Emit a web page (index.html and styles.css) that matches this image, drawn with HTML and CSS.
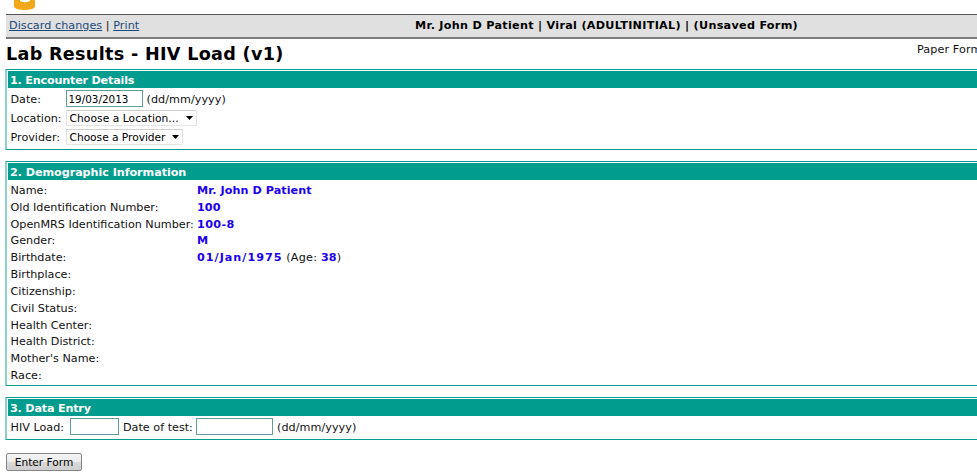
FILE: index.html
```html
<!DOCTYPE html>
<html lang="en">
<head>
<meta charset="utf-8">
<title>Lab Results - HIV Load (v1)</title>
<link rel="stylesheet" href="styles.css">
</head>
<body>
<div class="page">
  <div class="logo"><svg width="24" height="11" viewBox="0 0 24 11"><path d="M1 0H7V1Q12 3.5 17 1V0H22V7Q20 10 11.5 10Q3 10 1 7Z" fill="#f0a818"/></svg></div>
  <div class="bar">
    <div class="links"><a href="#">Discard changes</a> | <a href="#">Print</a></div>
    <div class="patient">Mr. John D Patient | Viral (ADULTINITIAL) | (Unsaved Form)</div>
  </div>
  <div class="title"><h1>Lab Results - HIV Load (v1)</h1><span class="paper">Paper Form</span></div>

  <section class="encounter">
    <h2>1. Encounter Details</h2>
    <div class="field"><label>Date:</label><input class="date" value="19/03/2013"><span>(dd/mm/yyyy)</span></div>
    <div class="field"><label>Location:</label><div class="select location"><span>Choose a Location...</span><svg width="7" height="4"><path d="M0 0H7L3.5 4Z"/></svg></div></div>
    <div class="field"><label>Provider:</label><div class="select provider"><span>Choose a Provider</span><svg width="7" height="4"><path d="M0 0H7L3.5 4Z"/></svg></div></div>
  </section>

  <section class="demographic">
    <h2>2. Demographic Information</h2>
    <dl>
      <dt>Name:</dt><dd><b>Mr. John D Patient</b></dd>
      <dt>Old Identification Number:</dt><dd><b>100</b></dd>
      <dt>OpenMRS Identification Number:</dt><dd><b class="number">100-8</b></dd>
      <dt>Gender:</dt><dd><b>M</b></dd>
      <dt>Birthdate:</dt><dd><b class="birth">01/Jan/1975</b> <span class="age">(Age: <b>38</b>)</span></dd>
      <dt>Birthplace:</dt><dd></dd>
      <dt>Citizenship:</dt><dd></dd>
      <dt>Civil Status:</dt><dd></dd>
      <dt>Health Center:</dt><dd></dd>
      <dt>Health District:</dt><dd></dd>
      <dt>Mother's Name:</dt><dd></dd>
      <dt>Race:</dt><dd></dd>
    </dl>
  </section>

  <section class="entry">
    <h2>3. Data Entry</h2>
    <div class="field"><label class="load">HIV Load:</label><input class="short"><label class="test">Date of test:</label><input class="date"><span>(dd/mm/yyyy)</span></div>
  </section>
  <button>Enter Form</button>
</div>
</body>
</html>
```
FILE: styles.css
```css
* { box-sizing: border-box; }
body { margin: 0; background: #fff; color: #111; font: 11.2px/17px "DejaVu Sans", sans-serif; overflow: hidden; }
.page { padding-left: 6px; white-space: nowrap; }
.logo { height: 14px; padding-left: 7px; }
.logo svg { display: block; }
.bar { height: 25px; display: flex; background: #e0e0e0; border-top: 1px solid #555; border-bottom: 2px solid #7c7c7c; padding: 2px 0 0 3px; }
.links { width: 406px; letter-spacing: 0.04px; }
a { color: #1c4a7a; }
.patient { font-weight: bold; color: #000; letter-spacing: 0.29px; }
.title { height: 30px; display: flex; }
h1 { flex: 0 0 911px; margin: 0; font-size: 17.6px; line-height: 30px; letter-spacing: 0.3px; color: #000; }
.paper { line-height: 22px; letter-spacing: 0.1px; }
section { border: 1px solid #009d8e; border-left: 2px solid #8bd3ca; border-right: 0; margin-left: -1px; padding: 1px 0 0 1px; margin-bottom: 11px; }
h2 { margin: 0; height: 17px; padding-left: 2px; font-size: 11.2px; line-height: 19px; letter-spacing: -0.06px; color: #fff; background: #009d8e; }
.encounter { height: 81px; }
.demographic { height: 225px; }
.entry { height: 43px; }
.field { height: 19px; display: flex; align-items: center; padding-left: 2.5px; }
.encounter h2 { margin-bottom: 1px; letter-spacing: -0.2px; }
.entry h2 { margin-bottom: 1px; letter-spacing: -0.2px; }
.field label { width: 55px; letter-spacing: 0; }
.field label, .field > span { padding-top: 1px; }
.field span { letter-spacing: 0.05px; }
input { height: 17px; padding: 1px 2px; margin: 0 4px 0 0; border: 1px solid #5fa09a; background: #fff; color: #000; font: 10.4px "DejaVu Sans", sans-serif; }
.date { width: 77px; }
.short { width: 49px; }
.field .load { width: 59.5px; }
.field .test { width: 73px; }
.select { height: 16px; display: flex; align-items: center; justify-content: space-between; padding: 1px 3px 0 3px; border: 1px solid #e4e4e4; border-top-color: #d0d0d0; font-size: 10.7px; color: #000; }
.select.location { width: 131px; }
.select.provider { width: 117px; }
.provider span { letter-spacing: -0.05px; }
dl { margin: 2px 0 0; display: grid; grid-template-columns: 186.5px 1fr; grid-auto-rows: 16.82px; line-height: 18px; padding-left: 2.5px; }
dt, dd { margin: 0; }
b { color: #2000ee; letter-spacing: 0.06px; }
.number { letter-spacing: 0.35px; }
.birth { letter-spacing: 1px; }
.age { letter-spacing: 0.25px; }
button { display: block; width: 76px; height: 18px; margin: 13px 0 0; padding: 0; border: 1px solid #858585; border-radius: 2px; background: linear-gradient(#f3f3f3, #ebebeb 50%, #dadada 50%, #cfcfcf); color: #000; font: 10.6px/14px "DejaVu Sans", sans-serif; }
```
